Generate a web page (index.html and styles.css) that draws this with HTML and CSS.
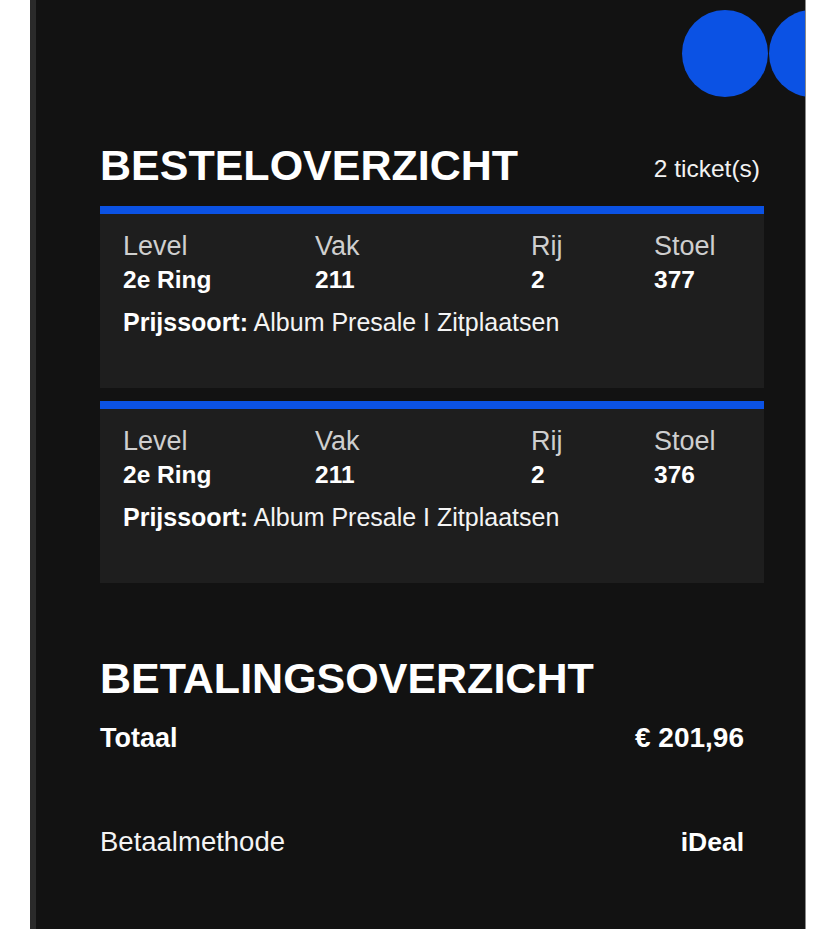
FILE: index.html
```html
<!DOCTYPE html>
<html lang="nl">
<head>
<meta charset="utf-8">
<title>Besteloverzicht</title>
<link rel="stylesheet" href="styles.css">
</head>
<body>
<div class="panel">
  <div class="dots">
    <span class="dot"></span>
    <span class="dot"></span>
  </div>
  <div class="content">
    <div class="head-row">
      <h1 class="title">BESTELOVERZICHT</h1>
      <span class="count">2 ticket(s)</span>
    </div>

    <div class="card">
      <div class="grid">
        <div class="label">Level</div>
        <div class="label">Vak</div>
        <div class="label">Rij</div>
        <div class="label">Stoel</div>
        <div class="value">2e Ring</div>
        <div class="value">211</div>
        <div class="value">2</div>
        <div class="value">377</div>
      </div>
      <div class="price"><b>Prijssoort:</b> Album Presale I Zitplaatsen</div>
    </div>

    <div class="card">
      <div class="grid">
        <div class="label">Level</div>
        <div class="label">Vak</div>
        <div class="label">Rij</div>
        <div class="label">Stoel</div>
        <div class="value">2e Ring</div>
        <div class="value">211</div>
        <div class="value">2</div>
        <div class="value">376</div>
      </div>
      <div class="price"><b>Prijssoort:</b> Album Presale I Zitplaatsen</div>
    </div>

    <h2 class="title pay-title">BETALINGSOVERZICHT</h2>
    <div class="row total">
      <span>Totaal</span>
      <span class="amount">€ 201,96</span>
    </div>
    <div class="row method">
      <span>Betaalmethode</span>
      <span class="strong">iDeal</span>
    </div>
  </div>
</div>
</body>
</html>
```

FILE: styles.css
```css
html, body {
  margin: 0;
  padding: 0;
  background: #ffffff;
}

body {
  font-family: "Liberation Sans", Arial, Helvetica, sans-serif;
  color: #ffffff;
}

.panel {
  box-sizing: border-box;
  margin-left: 30px;
  width: 776px;
  min-height: 929px;
  background: #121212;
  border-left: 6px solid #2a2a2a;
  border-right: 1px solid #8a8a8a;
  overflow: hidden;
}

.dots {
  display: flex;
  justify-content: flex-end;
  gap: 1px;
  padding-top: 10px;
  margin-right: -50px;
}

.dot {
  display: block;
  width: 86px;
  height: 87px;
  border-radius: 50%;
  background: #0b52e4;
}

.content {
  padding: 0 41px 40px 64px;
}

.head-row {
  display: flex;
  justify-content: space-between;
  align-items: flex-end;
  margin-top: 47px;
  margin-bottom: 19px;
}

.title {
  margin: 0;
  font-size: 43px;
  line-height: 43px;
  font-weight: 700;
  color: #ffffff;
}

.count {
  font-size: 24.5px;
  color: #f2f2f2;
  margin-right: 4px;
  margin-bottom: 4px;
}

.card {
  background: #1e1e1e;
  border-top: 8px solid #0b52e4;
  padding: 16px 0 51px 23px;
  margin-bottom: 13px;
}

.grid {
  display: grid;
  grid-template-columns: 192px 216px 123px 1fr;
  row-gap: 3px;
}

.label {
  font-size: 27px;
  line-height: 32px;
  color: #cfcfcf;
}

.value {
  font-size: 24.5px;
  line-height: 30px;
  font-weight: 700;
  color: #ffffff;
}

.price {
  margin-top: 12px;
  font-size: 25px;
  line-height: 30px;
  color: #f4f4f4;
}

.price b {
  font-weight: 700;
  color: #ffffff;
}

.pay-title {
  margin-top: 74px;
}

.row {
  display: flex;
  justify-content: space-between;
  align-items: baseline;
  padding-right: 20px;
}

.total {
  margin-top: 22px;
  font-size: 27px;
  line-height: 32px;
  font-weight: 700;
}

.amount {
  font-size: 28px;
}

.method {
  margin-top: 72px;
  font-size: 27.5px;
  line-height: 32px;
  color: #f4f4f4;
}

.method .strong {
  font-size: 26.5px;
  font-weight: 700;
  color: #ffffff;
}
```
